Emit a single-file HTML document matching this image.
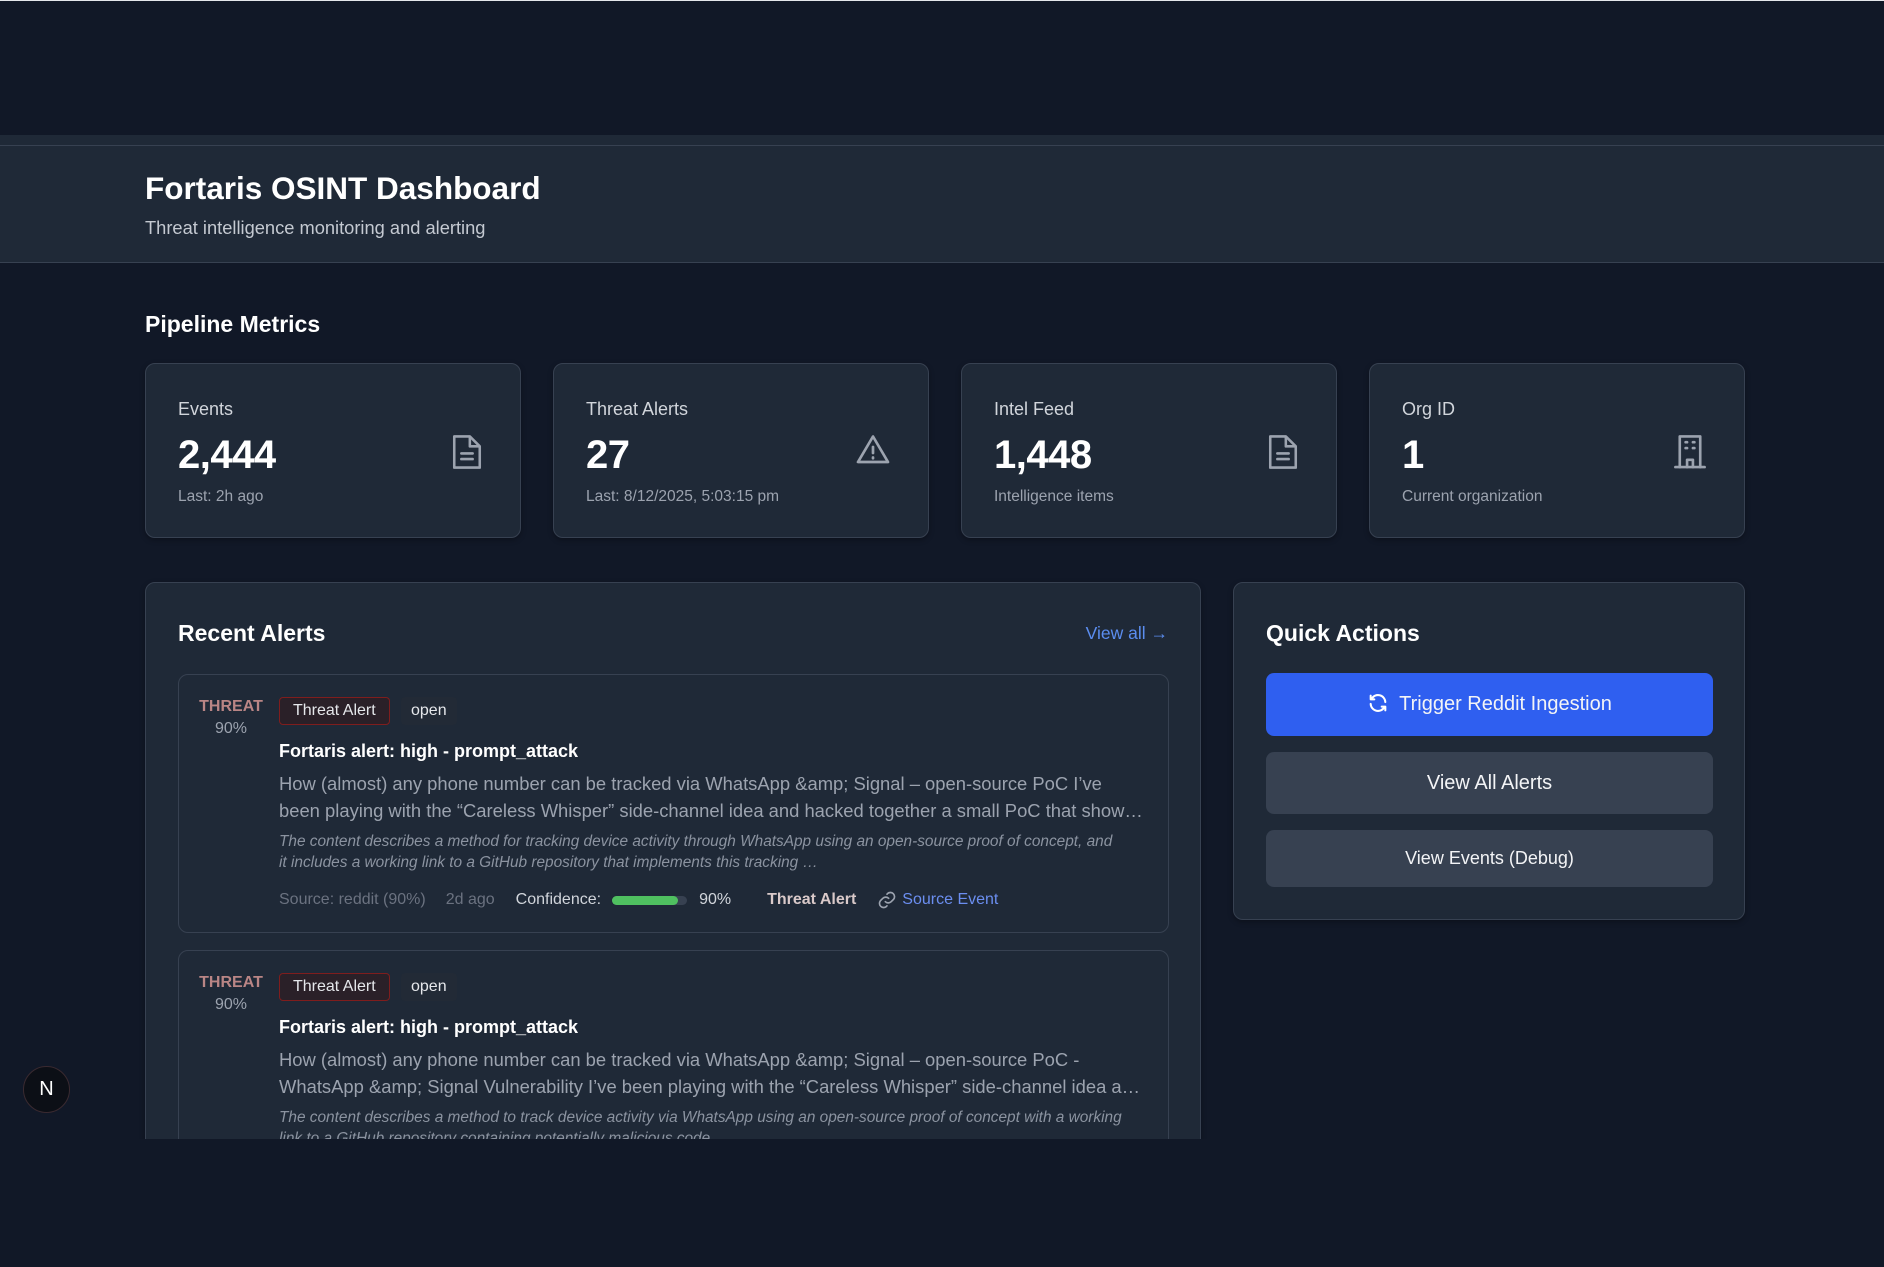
<!DOCTYPE html>
<html><head><meta charset="utf-8"><style>
*{box-sizing:border-box;margin:0;padding:0}
body{width:1884px;height:1267px;background:#111827;font-family:"Liberation Sans",sans-serif;position:relative;overflow:hidden;color:#f3f4f6}
.a{position:absolute}
.vp{position:absolute;left:0;top:135px;width:1884px;height:1004px;overflow:hidden;background:#111827}
.hdr{position:absolute;left:0;top:0;width:1884px;height:128px;background:#1f2937;border-bottom:1px solid #374151}
.hdr:before{content:"";position:absolute;left:0;top:10px;width:100%;height:1px;background:#374151}
.card{position:absolute;background:#1f2937;border:1px solid #374151;border-radius:10px;box-shadow:0 2px 6px rgba(0,0,0,.3)}
.lbl{position:absolute;left:32px;top:35px;font-size:18px;color:#d1d5db}
.num{position:absolute;left:32px;top:69px;font-size:40px;font-weight:bold;color:#fff;letter-spacing:-0.5px}
.sub{position:absolute;left:32px;top:124px;font-size:15.5px;color:#9ca3af}
.ic{position:absolute;right:36px;top:68px}
.al{position:absolute;left:32px;width:991px;height:259px;border:1px solid #374151;border-radius:10px;background:#1f2937}
.thr{position:absolute;left:20px;top:21px;font-size:16px;font-weight:bold;color:#b98585;width:64px;text-align:center;line-height:22px}
.thr span{display:block;font-weight:normal;color:#9ca3af}
.bd{position:absolute;top:22px;left:100px;height:28px;padding:0 13px;line-height:26px;font-size:16px;border:1px solid #7f1d1d;border-radius:4px;background:#2a2028;color:#e5e7eb}
.op{position:absolute;top:22px;left:222px;height:28px;padding:0 10px;line-height:28px;font-size:16px;background:#222a36;color:#e5e7eb;border-radius:4px}
.tt{position:absolute;left:100px;top:66px;font-size:18px;font-weight:bold;color:#fff}
.ds{position:absolute;left:100px;top:95px;width:870px;font-size:18.4px;line-height:27px;color:#9ca3af;white-space:nowrap}
.sm{position:absolute;left:100px;top:156px;width:870px;font-size:15.4px;line-height:21px;color:#8b93a0;font-style:italic}
.mt{position:absolute;left:100px;top:215px;font-size:16px;color:#6b7280;white-space:nowrap;display:flex;align-items:center}
.btn{position:absolute;left:32px;width:447px;border-radius:8px;text-align:center;color:#f3f4f6}
</style></head><body>
<div class="a" style="left:0;top:0;width:1884px;height:1px;background:#e5e7eb"></div>
<div class="vp">
 <div class="hdr">
  <div class="a" style="left:145px;top:35px;font-size:31.5px;font-weight:bold;color:#fff">Fortaris OSINT Dashboard</div>
  <div class="a" style="left:145px;top:82px;font-size:18.3px;color:#c4c9d1">Threat intelligence monitoring and alerting</div>
 </div>
 <div class="a" style="left:145px;top:176px;font-size:23px;font-weight:bold;color:#fff">Pipeline Metrics</div>

 <div class="card" style="left:145px;top:228px;width:376px;height:175px">
  <div class="lbl">Events</div><div class="num">2,444</div><div class="sub">Last: 2h ago</div>
  <svg class="ic" width="34" height="40" viewBox="0 0 24 28" fill="none" stroke="#9ca3af" stroke-width="1.8" stroke-linejoin="round"><path d="M3 3h11l7 7v15H3z"/><path d="M14 3v7h7"/><path d="M8 15h8M8 19h8" stroke-linecap="round"/></svg>
 </div>
 <div class="card" style="left:553px;top:228px;width:376px;height:175px">
  <div class="lbl">Threat Alerts</div><div class="num">27</div><div class="sub">Last: 8/12/2025, 5:03:15 pm</div>
  <svg class="ic" width="38" height="36" viewBox="0 0 24 24" fill="none" stroke="#9ca3af" stroke-width="1.8" stroke-linejoin="round" stroke-linecap="round"><path d="M12 3L2 20h20z"/><path d="M12 10v4M12 17v.5"/></svg>
 </div>
 <div class="card" style="left:961px;top:228px;width:376px;height:175px">
  <div class="lbl">Intel Feed</div><div class="num">1,448</div><div class="sub">Intelligence items</div>
  <svg class="ic" width="34" height="40" viewBox="0 0 24 28" fill="none" stroke="#9ca3af" stroke-width="1.8" stroke-linejoin="round"><path d="M3 3h11l7 7v15H3z"/><path d="M14 3v7h7"/><path d="M8 15h8M8 19h8" stroke-linecap="round"/></svg>
 </div>
 <div class="card" style="left:1369px;top:228px;width:376px;height:175px">
  <div class="lbl">Org ID</div><div class="num">1</div><div class="sub">Current organization</div>
  <svg class="ic" width="36" height="38" viewBox="0 0 24 26" fill="none" stroke="#9ca3af" stroke-width="1.8" stroke-linejoin="round" stroke-linecap="round"><path d="M5 24V3h14v21"/><path d="M2 24h20"/><path d="M9 7h1M14 7h1M9 11h1M14 11h1"/><path d="M10 24v-5h4v5"/></svg>
 </div>

 <div class="card" style="left:145px;top:447px;width:1056px;height:620px">
  <div class="a" style="left:32px;top:37px;font-size:23px;font-weight:bold;color:#fff">Recent Alerts</div>
  <div class="a" style="right:32px;top:40px;font-size:17.5px;color:#5b8def">View all →</div>
  <div class="al" style="top:91px">
   <div class="thr">THREAT<span>90%</span></div>
   <div class="bd">Threat Alert</div><div class="op">open</div>
   <div class="tt">Fortaris alert: high - prompt_attack</div>
   <div class="ds">How (almost) any phone number can be tracked via WhatsApp &amp;amp; Signal – open-source PoC I’ve<br>been playing with the “Careless Whisper” side-channel idea and hacked together a small PoC that show…</div>
   <div class="sm">The content describes a method for tracking device activity through WhatsApp using an open-source proof of concept, and<br>it includes a working link to a GitHub repository that implements this tracking …</div>
   <div class="mt">Source: reddit (90%)<span style="margin-left:20px">2d ago</span><span style="margin-left:21px;color:#d1d5db">Confidence:</span><span style="display:inline-block;margin-left:11px;width:75px;height:9px;border-radius:5px;background:#374151;position:relative"><span style="position:absolute;left:0;top:0;width:66px;height:9px;border-radius:5px;background:#4fc060"></span></span><span style="margin-left:12px;color:#d1d5db">90%</span><span style="margin-left:36px;color:#d9c9c9;font-weight:bold">Threat Alert</span>
   <svg style="margin-left:21px" width="20" height="20" viewBox="0 0 24 24" fill="none" stroke="#9ca3af" stroke-width="2" stroke-linecap="round"><path d="M10 14a5 5 0 0 0 7 0l3-3a5 5 0 0 0-7-7l-1 1"/><path d="M14 10a5 5 0 0 0-7 0l-3 3a5 5 0 0 0 7 7l1-1"/></svg><span style="margin-left:5px;color:#6b8ef0">Source Event</span></div>
  </div>
  <div class="al" style="top:367px">
   <div class="thr">THREAT<span>90%</span></div>
   <div class="bd">Threat Alert</div><div class="op">open</div>
   <div class="tt">Fortaris alert: high - prompt_attack</div>
   <div class="ds">How (almost) any phone number can be tracked via WhatsApp &amp;amp; Signal – open-source PoC -<br>WhatsApp &amp;amp; Signal Vulnerability I’ve been playing with the “Careless Whisper” side-channel idea a…</div>
   <div class="sm">The content describes a method to track device activity via WhatsApp using an open-source proof of concept with a working<br>link to a GitHub repository containing potentially malicious code.</div>
  </div>
 </div>

 <div class="card" style="left:1233px;top:447px;width:512px;height:338px">
  <div class="a" style="left:32px;top:37px;font-size:23px;font-weight:bold;color:#fff">Quick Actions</div>
  <div class="btn" style="top:90px;height:63px;background:#2f5ff0;font-size:20px;line-height:63px">
   <svg style="vertical-align:-4px;margin-right:10px" width="22" height="22" viewBox="0 0 24 24" fill="none" stroke="#fff" stroke-width="2.2" stroke-linecap="round" stroke-linejoin="round"><path d="M20 11A8 8 0 0 0 5 7.5M4 4v4h4"/><path d="M4 13a8 8 0 0 0 15 3.5M20 20v-4h-4"/></svg>Trigger Reddit Ingestion</div>
  <div class="btn" style="top:169px;height:62px;background:#374151;font-size:20px;line-height:62px">View All Alerts</div>
  <div class="btn" style="top:247px;height:57px;background:#374151;font-size:18px;line-height:57px">View Events (Debug)</div>
 </div>

 <div class="a" style="left:23px;top:931px;width:47px;height:47px;border-radius:50%;background:#0c0f16;border:1px solid #3a2a30;color:#fff;font-size:20px;text-align:center;line-height:45px">N</div>
</div>
</body></html>
